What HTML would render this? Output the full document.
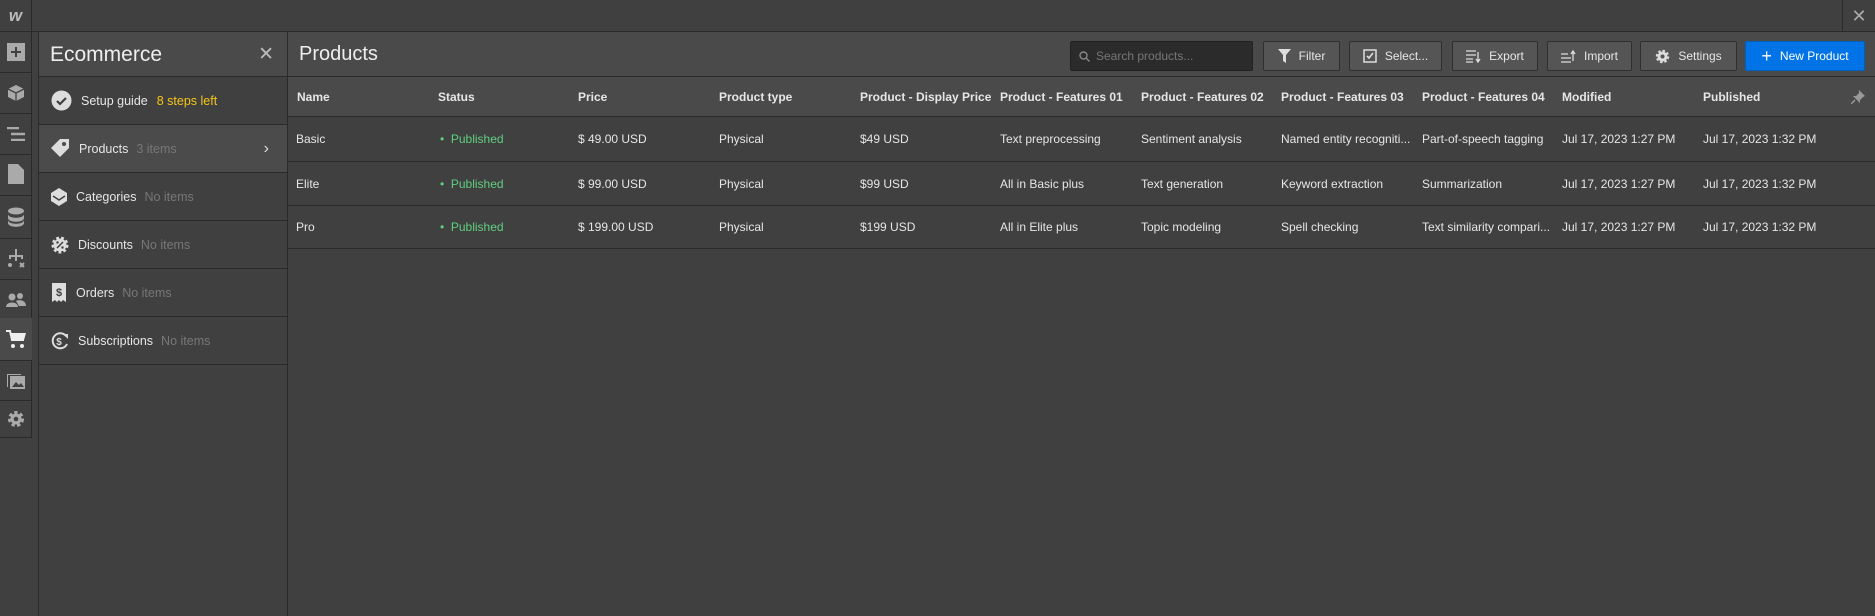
<!DOCTYPE html>
<html><head><meta charset="utf-8"><style>
*{box-sizing:border-box;margin:0;padding:0}
body{width:1875px;height:616px;background:#404040;font-family:"Liberation Sans",sans-serif;color:#e6e6e6;position:relative;overflow:hidden;font-size:12px}
.a{position:absolute}
.top{left:0;top:0;width:1875px;height:32px;background:#404040;border-bottom:1px solid #2a2a2a}
.rail{left:0;top:32px;width:32px;height:406px;border-right:1px solid #2a2a2a}
.ri{position:absolute;left:0;width:32px;height:41px;border-bottom:1px solid #2a2a2a;display:flex;align-items:center;justify-content:center}
.panel{left:38px;top:32px;width:250px;height:584px;background:#404040;border-left:1px solid #2a2a2a;border-right:1px solid #2a2a2a}
.ph{height:45px;background:#4a4a4a;border-bottom:1px solid #2a2a2a;font-size:21px;padding:11px 0 0 11px;color:#eee;position:relative}
.prow{height:48px;border-bottom:1px solid #2a2a2a;display:flex;align-items:center;padding-left:12px;font-size:12.5px;color:#e6e6e6}
.prow svg{margin-right:9px}
.prow .m{color:#777;margin-left:8px}
.main{left:288px;top:32px;width:1587px;height:584px}
.mh{height:45px;background:#4a4a4a;border-bottom:1px solid #2a2a2a}
.btn{position:absolute;top:9px;height:30px;background:#555;border:1px solid #2f2f2f;border-radius:2px;display:flex;align-items:center;justify-content:center;font-size:12px;color:#e6e6e6;gap:8px}
.th{position:absolute;top:45px;left:0;width:1587px;height:40px;background:#4a4a4a;border-bottom:1px solid #2a2a2a;font-weight:bold;font-size:12px}
.tr{position:absolute;left:0;width:1587px;border-bottom:1px solid #2a2a2a;font-size:12px}
.c{position:absolute;top:0;height:100%;display:flex;align-items:center;white-space:nowrap;overflow:hidden}
.g{color:#5fd07f}
</style></head><body>
<div class="a top"></div>
<div class="a" style="left:0;top:0;width:32px;height:32px;border-right:1px solid #2a2a2a;color:#bbb;font-weight:bold;font-style:italic;font-size:17px;display:flex;align-items:center;justify-content:center">w</div>
<div class="a" style="left:1842px;top:0;width:33px;height:32px;border-left:1px solid #2a2a2a;color:#aaa;font-size:18px;display:flex;align-items:center;justify-content:center">✕</div>
<div class="a rail">
<div class="ri" style="top:0"><svg width="18" height="18"><rect width="18" height="18" fill="#aaa"/><path d="M9 4v10M4 9h10" stroke="#404040" stroke-width="2"/></svg></div>
<div class="ri" style="top:41px"><svg width="18" height="18"><path d="M9 1l8 4v8l-8 4-8-4V5z" fill="#aaa"/><path d="M1 5l8 4 8-4M9 9v8" stroke="#404040" stroke-width="1.3" fill="none"/></svg></div>
<div class="ri" style="top:82px"><svg width="18" height="14"><path d="M0 1h12M4 7h14M4 13h14" stroke="#aaa" stroke-width="2.4"/></svg></div>
<div class="ri" style="top:120px;height:44px"><svg width="16" height="20"><path d="M0 0h10l6 6v14H0z" fill="#aaa"/></svg></div>
<div class="ri" style="top:164px;height:43px"><svg width="18" height="20"><ellipse cx="9" cy="4" rx="8" ry="3.5" fill="#aaa"/><path d="M1 7c0 5 16 5 16 0v4c0 5-16 5-16 0zM1 13c0 5 16 5 16 0v3c0 5-16 5-16 0z" fill="#aaa"/></svg></div>
<div class="ri" style="top:207px;height:41px"><svg width="18" height="20"><path d="M9 0v6M3 10V7h12v3M9 7v5" stroke="#aaa" stroke-width="2" fill="none"/><circle cx="3" cy="16" r="2" fill="#aaa"/><path d="M13 14l4 4M17 14l-4 4" stroke="#aaa" stroke-width="2"/></svg></div>
<div class="ri" style="top:248px;height:40px"><svg width="20" height="14"><circle cx="6" cy="4" r="3.5" fill="#aaa"/><circle cx="14" cy="3" r="3" fill="#aaa"/><path d="M0 14c0-6 12-6 12 0zM10 8c3-2 10-1 10 5h-7z" fill="#aaa"/></svg></div>
<div class="ri" style="top:286px;height:43px;background:#4a4a4a;border-right:0"><svg width="20" height="18"><path d="M0 1h4l2 9h12" stroke="#eee" stroke-width="2" fill="none"/><path d="M5 3h15l-2 7H6z" fill="#eee"/><circle cx="7" cy="16" r="2" fill="#eee"/><circle cx="16" cy="16" r="2" fill="#eee"/></svg></div>
<div class="ri" style="top:329px;height:40px"><svg width="20" height="18"><rect x="4" y="4" width="15" height="13" fill="#aaa"/><path d="M1 2h14v1H2v12H1z" fill="#aaa"/><path d="M6 15l4-5 3 3 2-2 3 4z" fill="#404040"/></svg></div>
<div class="ri" style="top:369px;height:37px"><svg width="18" height="18"><circle cx="9" cy="9" r="6" fill="none" stroke="#aaa" stroke-width="4" stroke-dasharray="3 2.3"/><circle cx="9" cy="9" r="5.5" fill="#aaa"/><circle cx="9" cy="9" r="2.3" fill="#404040"/></svg></div>
</div>
<div class="a panel">
<div class="ph">Ecommerce<span style="position:absolute;right:13px;top:11px;color:#bbb;font-size:19px">✕</span></div>
<div class="prow" style="height:48px"><svg width="21" height="21"><circle cx="10.5" cy="10.5" r="10" fill="#ddd"/><path d="M6 11l3 3 6-6" stroke="#404040" stroke-width="2.2" fill="none"/></svg>Setup guide<span style="color:#f5c518;margin-left:9px">8 steps left</span></div>
<div class="prow" style="background:#4b4b4b;position:relative"><svg width="19" height="19"><path d="M0 9l9-9h9v9l-9 9z" fill="#ddd"/><circle cx="13" cy="5" r="2" fill="#4b4b4b"/></svg>Products<span class="m">3 items</span><span style="position:absolute;right:18px;color:#ddd;font-size:16px">›</span></div>
<div class="prow" style="padding-left:12px"><svg width="16" height="18"><path d="M8 0l8 5v8l-8 5-8-5V5z" fill="#ddd"/><path d="M2 8l6 4 6-4" stroke="#404040" stroke-width="1.5" fill="none"/></svg>Categories<span class="m">No items</span></div>
<div class="prow"><svg width="18" height="18"><circle cx="9" cy="9" r="6.5" fill="#ddd" stroke="#ddd" stroke-width="4" stroke-dasharray="2.5 2"/><path d="M6 12l6-6" stroke="#404040" stroke-width="1.5"/><circle cx="6.5" cy="6.5" r="1.2" fill="#404040"/><circle cx="11.5" cy="11.5" r="1.2" fill="#404040"/></svg>Discounts<span class="m">No items</span></div>
<div class="prow"><svg width="16" height="19"><path d="M1 0h14v19l-3-2-2 2-2-2-2 2-2-2-3 2z" fill="#ddd"/><text x="8" y="13" font-size="11" font-weight="bold" text-anchor="middle" fill="#404040" font-family="Liberation Sans">$</text></svg>Orders<span class="m">No items</span></div>
<div class="prow"><svg width="18" height="18"><path d="M15 4A7.5 7.5 0 1 0 16 12" stroke="#ddd" stroke-width="2" fill="none"/><path d="M12 2h5v5z" fill="#ddd"/><text x="8" y="13" font-size="10" font-weight="bold" text-anchor="middle" fill="#ddd" font-family="Liberation Sans">$</text></svg>Subscriptions<span class="m">No items</span></div>
</div>
<div class="a main">
<div class="mh"><div class="a" style="left:11px;top:11px;font-size:20px;color:#eee">Products</div>
<div class="btn" style="left:782px;width:183px;background:#2b2b2b;border-color:#222;justify-content:flex-start;padding-left:8px;color:#777;gap:6px"><svg width="11" height="11"><circle cx="4.5" cy="4.5" r="3.5" stroke="#888" stroke-width="1.4" fill="none"/><path d="M7 7l3.5 3.5" stroke="#888" stroke-width="1.4"/></svg>Search products...</div>
<div class="btn" style="left:975px;width:77px"><svg width="13" height="14"><path d="M0 0h13L8 6v8L5 12V6z" fill="#ddd"/></svg>Filter</div>
<div class="btn" style="left:1061px;width:93px"><svg width="14" height="14"><rect x="1" y="1" width="12" height="12" fill="none" stroke="#ddd" stroke-width="1.5"/><path d="M4 7l2 2 4-5" stroke="#ddd" stroke-width="1.6" fill="none"/></svg>Select...</div>
<div class="btn" style="left:1164px;width:86px"><svg width="15" height="13"><path d="M0 1h10M0 5h10M0 9h7M0 12h7M12 2v10M10 9l2 3 2-3" stroke="#ddd" stroke-width="1.3" fill="none"/></svg>Export</div>
<div class="btn" style="left:1259px;width:85px"><svg width="15" height="13"><path d="M0 4h7M0 8h10M0 12h10M12 11V1M10 4l2-3 2 3" stroke="#ddd" stroke-width="1.3" fill="none"/></svg>Import</div>
<div class="btn" style="left:1352px;width:97px"><svg width="15" height="15"><circle cx="7.5" cy="7.5" r="5" fill="#ddd" stroke="#ddd" stroke-width="3.5" stroke-dasharray="2.2 1.7"/><circle cx="7.5" cy="7.5" r="2" fill="#555"/></svg>Settings</div>
<div class="btn" style="left:1457px;width:120px;background:#0073e6;border-color:#0060c0;color:#fff"><span style="font-size:18px;line-height:1">+</span>New Product</div>
</div>
<div class="th">
<div class="c" style="left:9px">Name</div><div class="c" style="left:150px">Status</div><div class="c" style="left:290px">Price</div><div class="c" style="left:431px">Product type</div><div class="c" style="left:572px;width:140px">Product - Display Price</div><div class="c" style="left:712px">Product - Features 01</div><div class="c" style="left:853px">Product - Features 02</div><div class="c" style="left:993px">Product - Features 03</div><div class="c" style="left:1134px">Product - Features 04</div><div class="c" style="left:1274px">Modified</div><div class="c" style="left:1415px">Published</div>
<div class="c" style="left:1563px;color:#999;font-weight:normal"><svg width="14" height="14"><path d="M8 0l6 6-2 1-3 3 0 3-7-7 3 0 3-3z" fill="#999"/><path d="M4 10L0 14" stroke="#999" stroke-width="1.4"/></svg></div>
</div>
<div class="tr" style="top:85px;height:45px">
<div class="c" style="left:8px">Basic</div><div class="c g" style="left:152px">•&nbsp;&nbsp;Published</div><div class="c" style="left:290px">$ 49.00 USD</div><div class="c" style="left:431px">Physical</div><div class="c" style="left:572px">$49 USD</div><div class="c" style="left:712px">Text preprocessing</div><div class="c" style="left:853px">Sentiment analysis</div><div class="c" style="left:993px;width:140px">Named entity recogniti...</div><div class="c" style="left:1134px;width:140px">Part-of-speech tagging</div><div class="c" style="left:1274px">Jul 17, 2023 1:27 PM</div><div class="c" style="left:1415px">Jul 17, 2023 1:32 PM</div></div>
<div class="tr" style="top:130px;height:44px">
<div class="c" style="left:8px">Elite</div><div class="c g" style="left:152px">•&nbsp;&nbsp;Published</div><div class="c" style="left:290px">$ 99.00 USD</div><div class="c" style="left:431px">Physical</div><div class="c" style="left:572px">$99 USD</div><div class="c" style="left:712px">All in Basic plus</div><div class="c" style="left:853px">Text generation</div><div class="c" style="left:993px">Keyword extraction</div><div class="c" style="left:1134px">Summarization</div><div class="c" style="left:1274px">Jul 17, 2023 1:27 PM</div><div class="c" style="left:1415px">Jul 17, 2023 1:32 PM</div></div>
<div class="tr" style="top:174px;height:43px">
<div class="c" style="left:8px">Pro</div><div class="c g" style="left:152px">•&nbsp;&nbsp;Published</div><div class="c" style="left:290px">$ 199.00 USD</div><div class="c" style="left:431px">Physical</div><div class="c" style="left:572px">$199 USD</div><div class="c" style="left:712px">All in Elite plus</div><div class="c" style="left:853px">Topic modeling</div><div class="c" style="left:993px">Spell checking</div><div class="c" style="left:1134px;width:140px">Text similarity compari...</div><div class="c" style="left:1274px">Jul 17, 2023 1:27 PM</div><div class="c" style="left:1415px">Jul 17, 2023 1:32 PM</div></div>
</div>
</body></html>
